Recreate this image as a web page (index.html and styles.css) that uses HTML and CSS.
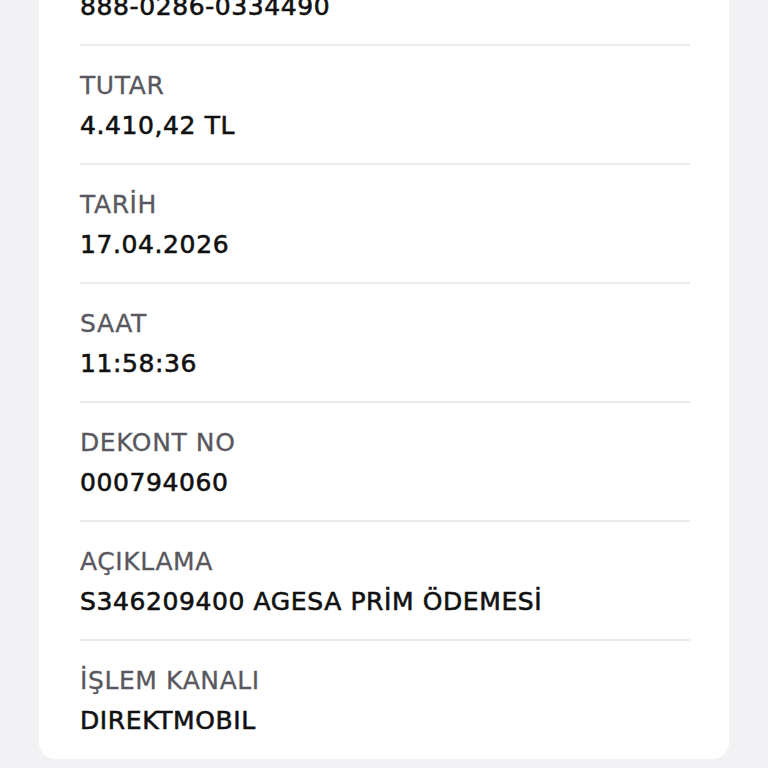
FILE: index.html
```html
<!DOCTYPE html>
<html>
<head>
  <title>Dekont</title>
  <link rel="stylesheet" href="styles.css">
</head>
<body>
  <div class="receipt-card">
    <div class="detail-row">
      <div class="detail-label">HESAP NO</div>
      <div class="detail-value">888-0286-0334490</div>
    </div>
    <div class="detail-row">
      <div class="detail-label">TUTAR</div>
      <div class="detail-value">4.410,42 TL</div>
    </div>
    <div class="detail-row">
      <div class="detail-label">TARİH</div>
      <div class="detail-value">17.04.2026</div>
    </div>
    <div class="detail-row">
      <div class="detail-label">SAAT</div>
      <div class="detail-value">11:58:36</div>
    </div>
    <div class="detail-row">
      <div class="detail-label">DEKONT NO</div>
      <div class="detail-value">000794060</div>
    </div>
    <div class="detail-row">
      <div class="detail-label">AÇIKLAMA</div>
      <div class="detail-value">S346209400 AGESA PRİM ÖDEMESİ</div>
    </div>
    <div class="detail-row">
      <div class="detail-label">İŞLEM KANALI</div>
      <div class="detail-value">DIREKTMOBIL</div>
    </div>
  </div>
</body>
</html>
```

FILE: styles.css
```css
body {
  font-family: "DejaVu Sans", sans-serif;
  background-color: #f2f2f4;
  margin: 0;
  padding: 0 39px;
  height: 768px;
  overflow: hidden;
}
.receipt-card {
  background-color: white;
  margin-top: -73px;
  padding: 0 39px 0 41px;
  border-radius: 16px;
}
.detail-row {
  padding: 20px 0 17px;
  border-bottom: 2px solid #ebebed;
}
.detail-row:last-child {
  border-bottom: none;
  padding-bottom: 18px;
}
.detail-label {
  font-size: 25px;
  line-height: 40px;
  color: #58585e;
  letter-spacing: 0.6px;
  -webkit-text-stroke: 0.3px #58585e;
}
.detail-value {
  font-size: 25px;
  line-height: 40px;
  color: #111;
  letter-spacing: 0.6px;
  -webkit-text-stroke: 0.6px #111;
}
```
